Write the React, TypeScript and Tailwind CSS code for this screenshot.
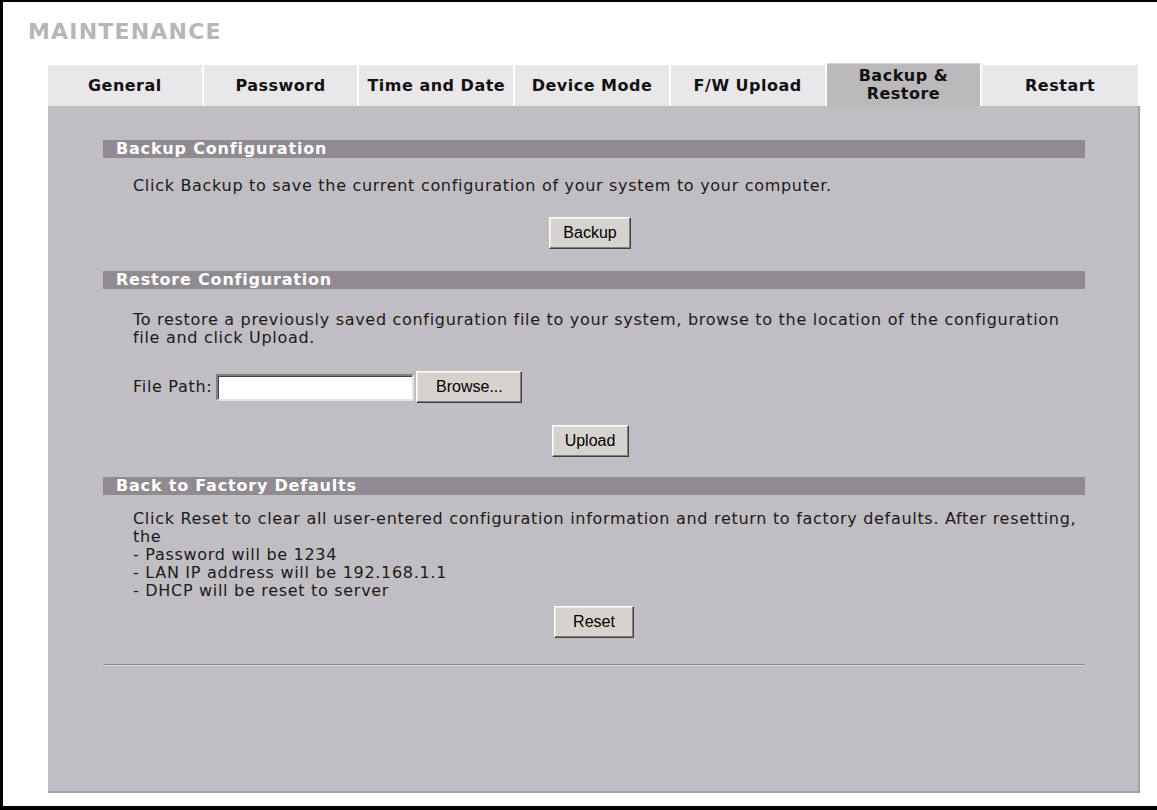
const tabs = [
  { label: ["General"] },
  { label: ["Password"] },
  { label: ["Time and Date"] },
  { label: ["Device Mode"] },
  { label: ["F/W Upload"] },
  { label: ["Backup &", "Restore"], active: true },
  { label: ["Restart"] },
];

const SectionBar = ({ title }: { title: string }) => (
  <div className="h-[18px] bg-[#8f8b91] pl-[13px] text-[16px] font-bold leading-[18px] tracking-[0.8px] text-white">
    {title}
  </div>
);

const WinButton = ({ label, w }: { label: string; w: string }) => (
  <button
    className={`${w} h-[32px] border border-t-white border-l-white border-r-[#404040] border-b-[#404040] bg-[#d6d3ce] font-['Liberation_Sans',Arial,sans-serif] text-[16px] text-black shadow-[inset_-1px_-1px_0_#808080,inset_1px_1px_0_#ece9e4]`}
  >
    {label}
  </button>
);

const App = () => {
  return (
    <div className="box-border h-[810px] w-[1157px] overflow-hidden border-t-2 border-b-4 border-l-[3px] border-black bg-white font-['DejaVu_Sans',Verdana,sans-serif]">
      <h1 className="ml-[25px] mt-[16px] text-[22px] font-bold leading-[28px] tracking-[1.2px] text-[#b6b6b6]">
        MAINTENANCE
      </h1>

      <div className="ml-[45px] mt-[19px] w-[1092px]">
        <div className="grid h-[41px] w-[1090px] grid-cols-7">
          {tabs.map((t) => (
            <div
              key={t.label.join(" ")}
              className={`flex flex-col items-center justify-center border-r-2 border-white text-[16px] font-bold leading-[18px] tracking-[0.5px] text-[#111] last:border-r-0 ${
                t.active ? "-mt-[2px] border-t border-t-[#d8d6d9] bg-[#bcb9bd]" : "bg-[#e9e7ea]"
              }`}
            >
              {t.label.map((l) => (
                <span key={l} className="whitespace-nowrap">
                  {l}
                </span>
              ))}
            </div>
          ))}
        </div>

        <div className="box-border h-[687px] border-r-2 border-b-2 border-[#a3a0a5] bg-[#c1bec3] pl-[55px] pr-[53px] pt-[34px] text-[16px] leading-[18px] tracking-[0.7px] text-[#1a1a1a]">
          <SectionBar title="Backup Configuration" />
          <p className="mt-[19px] pl-[30px]">
            Click Backup to save the current configuration of your system to your computer.
          </p>
          <div className="mt-[22px] flex justify-center pr-[8px] tracking-normal">
            <WinButton label="Backup" w="w-[82px]" />
          </div>

          <div className="mt-[22px]">
            <SectionBar title="Restore Configuration" />
          </div>
          <p className="mt-[22px] pl-[30px]">
            <span className="block whitespace-nowrap">
              To restore a previously saved configuration file to your system, browse to the location of the configuration
            </span>
            <span className="block">file and click Upload.</span>
          </p>
          <div className="mt-[24px] flex items-center pl-[30px]">
            <span className="mr-[4px]">File Path:</span>
            <input
              type="text"
              className="box-border h-[27px] w-[198px] border-2 border-t-[#808080] border-l-[#808080] border-r-[#e4e2e5] border-b-[#e4e2e5] bg-white shadow-[inset_1px_1px_0_#404040]"
            />
            <div className="ml-[2px] tracking-normal">
              <WinButton label="Browse..." w="w-[106px]" />
            </div>
          </div>
          <div className="mt-[22px] flex justify-center pr-[8px] tracking-normal">
            <WinButton label="Upload" w="w-[77px]" />
          </div>

          <div className="mt-[20px]">
            <SectionBar title="Back to Factory Defaults" />
          </div>
          <div className="mt-[15px] pl-[30px]">
            <p className="whitespace-nowrap">
              Click Reset to clear all user-entered configuration information and return to factory defaults. After resetting,
            </p>
            <p>the</p>
            <p>- Password will be 1234</p>
            <p>- LAN IP address will be 192.168.1.1</p>
            <p>- DHCP will be reset to server</p>
          </div>
          <div className="mt-[6px] flex justify-center tracking-normal">
            <WinButton label="Reset" w="w-[80px]" />
          </div>

          <div className="mt-[26px] h-[2px] border-t border-t-[#8c898e] border-b border-b-[#d9d7da]" />
        </div>
      </div>
    </div>
  );
};

export default App;
